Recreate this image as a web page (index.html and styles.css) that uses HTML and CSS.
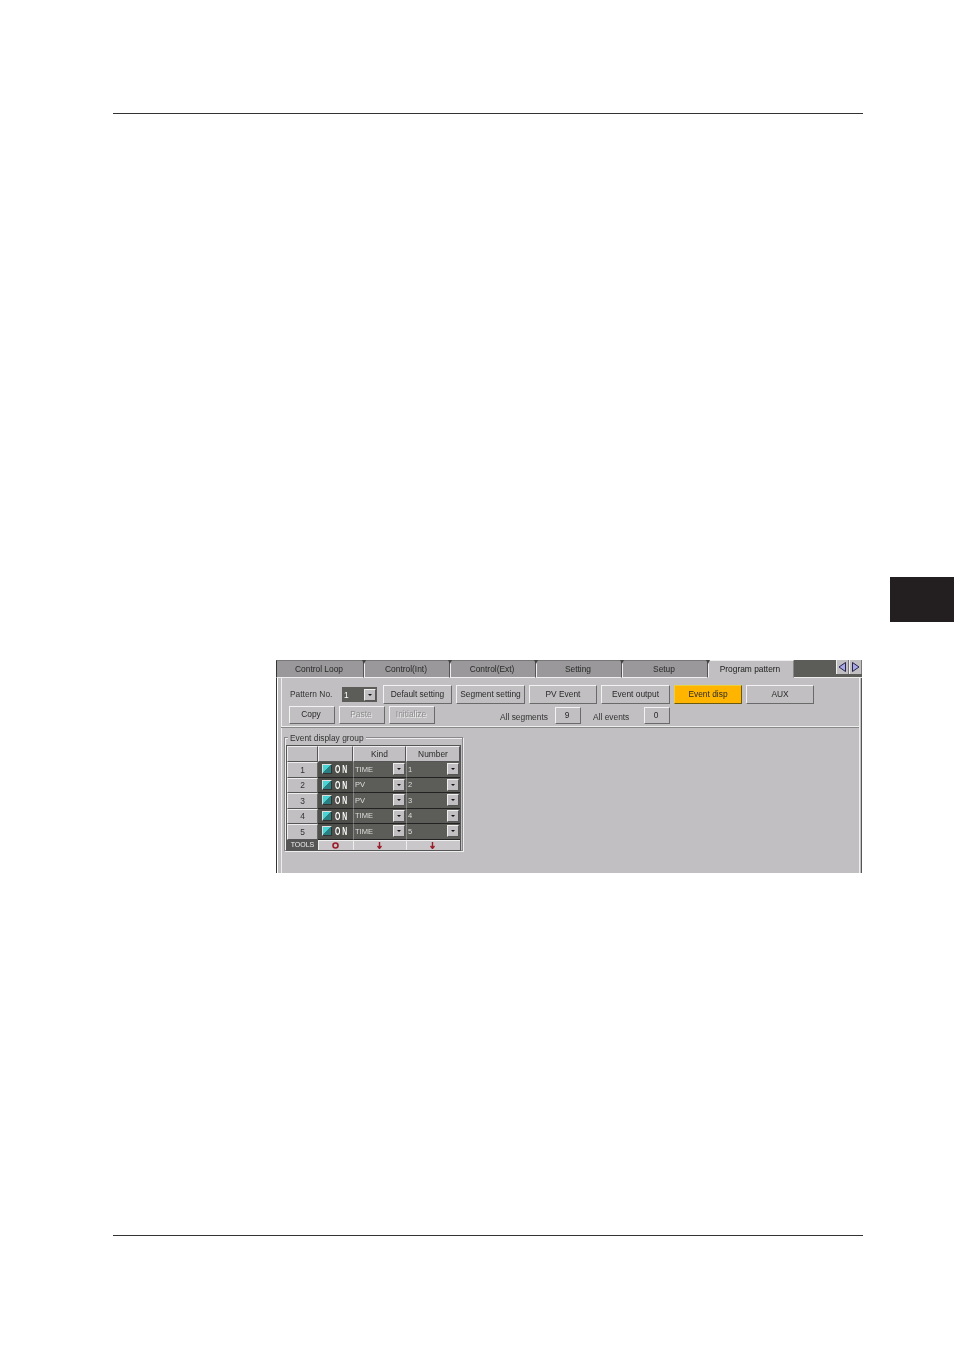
FILE: index.html
```html
<!DOCTYPE html>
<html lang="en">
<head>
    <meta charset="UTF-8">
    <title>Program pattern - Event disp</title>
    <link rel="stylesheet" href="styles.css">
</head>
<body>

    <div class="page">
        <hr class="rule">
        <div class="section-tab"></div>

        <div class="screen">
            <div class="tabs">
                <div class="tab">Control Loop</div>
                <div class="tab">Control(Int)</div>
                <div class="tab">Control(Ext)</div>
                <div class="tab">Setting</div>
                <div class="tab">Setup</div>
                <div class="tab active">Program pattern</div>
                <div class="tab-rest">
                    <div class="arrow-btn"><svg width="9" height="10" viewBox="0 0 9 10"><path d="M7.5 .5V9.5L1 5Z" fill="#a9a8e6" stroke="#23234a"/></svg></div>
                    <div class="arrow-btn"><svg width="9" height="10" viewBox="0 0 9 10"><path d="M1.5 .5V9.5L8 5Z" fill="#a9a8e6" stroke="#23234a"/></svg></div>
                </div>
            </div>

            <div class="panel">
                <div class="toolbar">
                    <div class="row row-top">
                        <span class="label pattern-label">Pattern No.</span>
                        <div class="select pattern-select"><span>1</span><i class="drop"></i></div>
                        <div class="btn wide">Default setting</div>
                        <div class="btn wide">Segment setting</div>
                        <div class="btn wide narrow">PV Event</div>
                        <div class="btn wide">Event output</div>
                        <div class="btn wide narrow selected">Event disp</div>
                        <div class="btn wide narrow">AUX</div>
                    </div>
                    <div class="row row-bottom">
                        <div class="btn small">Copy</div>
                        <div class="btn small disabled">Paste</div>
                        <div class="btn small disabled">Initialize</div>
                        <span class="label segments-label">All segments</span>
                        <div class="count count-seg">9</div>
                        <span class="label events-label">All events</span>
                        <div class="count count-ev">0</div>
                    </div>
                </div>

                <div class="group">
                    <span class="legend">Event display group</span>
                    <div class="grid">
                        <div class="cell head"></div>
                        <div class="cell head"></div>
                        <div class="cell head">Kind</div>
                        <div class="cell head">Number</div>

                        <div class="cell num">1</div>
                        <div class="cell onoff"><i class="lamp"></i><b>ON</b></div>
                        <div class="cell pick"><span>TIME</span><i class="drop"></i></div>
                        <div class="cell pick"><span>1</span><i class="drop"></i></div>

                        <div class="cell num">2</div>
                        <div class="cell onoff"><i class="lamp"></i><b>ON</b></div>
                        <div class="cell pick"><span>PV</span><i class="drop"></i></div>
                        <div class="cell pick"><span>2</span><i class="drop"></i></div>

                        <div class="cell num">3</div>
                        <div class="cell onoff"><i class="lamp"></i><b>ON</b></div>
                        <div class="cell pick"><span>PV</span><i class="drop"></i></div>
                        <div class="cell pick"><span>3</span><i class="drop"></i></div>

                        <div class="cell num">4</div>
                        <div class="cell onoff"><i class="lamp"></i><b>ON</b></div>
                        <div class="cell pick"><span>TIME</span><i class="drop"></i></div>
                        <div class="cell pick"><span>4</span><i class="drop"></i></div>

                        <div class="cell num">5</div>
                        <div class="cell onoff"><i class="lamp"></i><b>ON</b></div>
                        <div class="cell pick"><span>TIME</span><i class="drop"></i></div>
                        <div class="cell pick"><span>5</span><i class="drop"></i></div>

                        <div class="cell tools">TOOLS</div>
                        <div class="cell tool"><svg width="7" height="7" viewBox="0 0 7 7"><circle cx="3.5" cy="3.5" r="2.5" fill="none" stroke="#9c1c2c" stroke-width="1.6"/></svg></div>
                        <div class="cell tool"><svg width="5" height="7" viewBox="0 0 5 7"><path d="M2.5 0V6M.5 4L2.5 6.5 4.5 4" fill="none" stroke="#9c1c2c" stroke-width="1.4"/></svg></div>
                        <div class="cell tool"><svg width="5" height="7" viewBox="0 0 5 7"><path d="M2.5 0V6M.5 4L2.5 6.5 4.5 4" fill="none" stroke="#9c1c2c" stroke-width="1.4"/></svg></div>
                    </div>
                </div>
            </div>
        </div>

        <hr class="rule foot">
    </div>

</body>
</html>
```

FILE: styles.css
```css
html, body {
    margin: 0;
    padding: 0;
    background: #fff;
}
.page {
    position: relative;
    height: 1350px;
    padding-top: 113px;
    box-sizing: border-box;
    font-family: "Liberation Sans", Arial, sans-serif;
    font-size: 8.4px;
    color: #2a2a2a;
}
.rule {
    margin: 0 0 0 113px;
    width: 750px;
    height: 1px;
    border: none;
    background: #333;
}
.rule.foot {
    margin-top: 362px;
}
.section-tab {
    position: absolute;
    left: 890px;
    top: 577px;
    width: 64px;
    height: 45px;
    background: #231f20;
}

/* screen capture, soft like the scanned original */
.screen {
    width: 586px;
    height: 213px;
    margin: 546px 0 0 276px;
    display: flex;
    flex-direction: column;
    background: #c1bfc1;
    filter: blur(.3px);
}
.tabs {
    display: flex;
    height: 18px;
    flex: none;
}
.tab {
    position: relative;
    width: 86px;
    box-sizing: border-box;
    line-height: 17px;
    padding-right: 2px;
    text-align: center;
    background: #9a989a;
    border-left: 1px solid #eee;
    border-right: 1px solid #555;
    border-top: 1px solid #777;
    border-bottom: 1px solid #eee;
}
.tab:first-child {
    width: 88px;
    border-left-color: #333;
}
.tab::after {
    content: "";
    position: absolute;
    right: -3px;
    top: -1px;
    border-left: 2px solid transparent;
    border-right: 2px solid transparent;
    border-top: 4px solid #444;
    z-index: 1;
}
.tab.active {
    background: #c1bfc1;
    border-color: #eee;
    border-right-color: #888;
    border-bottom-color: #c1bfc1;
    color: #222;
}
.tab.active::after {
    display: none;
}
.tab-rest {
    flex: 1;
    display: flex;
    justify-content: flex-end;
    align-items: flex-start;
    background: #5c5c58;
    box-sizing: border-box;
    height: 18px;
    border-bottom: 1px solid #eee;
}
.arrow-btn {
    width: 13px;
    height: 14px;
    box-sizing: border-box;
    display: flex;
    align-items: center;
    justify-content: center;
    background: #c1bfc1;
    border-left: 1px solid #eee;
    border-right: 1px solid #777;
}
.panel {
    flex: 1;
    border-left: 1px solid #333;
    border-right: 1px solid #555;
    box-shadow: inset 1px 0 0 #fff, inset 4px 0 0 #c1bfc1, inset 5px 0 0 #eee, inset -1px 0 0 #c1bfc1, inset -2px 0 0 #eee;
    padding-left: 4px;
    min-height: 0;
}
.toolbar {
    height: 49px;
    box-sizing: border-box;
    border-bottom: 1px solid #eee;
    margin-right: 2px;
    box-shadow: 0 1px 0 #888;
}
.row {
    display: flex;
    align-items: center;
}
.row-top {
    height: 19px;
    padding-top: 7px;
}
.row-bottom {
    height: 18px;
    padding-top: 2px;
}
.label {
    color: #333;
}
.pattern-label {
    margin: 0 0 2px 9px;
    width: 52px;
}
.btn {
    box-sizing: border-box;
    text-align: center;
    background: #c1bfc1;
    border: 1px solid;
    border-color: #f2f2f2 #6a6a6a #6a6a6a #f2f2f2;
}
.btn.wide {
    width: 69px;
    height: 19px;
    line-height: 17px;
    margin-right: 4px;
}
.btn.narrow {
    width: 68px;
}
.select.pattern-select + .btn {
    margin-left: 6px;
}
.btn.selected {
    background: #ffb400;
    border-color: #e8d040 #6a5a10 #6a5a10 #e8d040;
}
.btn.small {
    width: 46px;
    height: 18px;
    line-height: 15px;
    padding-right: 2px;
    margin-right: 4px;
}
.btn.small:first-child {
    margin-left: 8px;
}
.btn.disabled {
    color: #8e8c8e;
    text-shadow: 1px 1px 0 #eee;
}
.select {
    display: flex;
    align-items: center;
    justify-content: space-between;
    box-sizing: border-box;
    background: #5c5c58;
    color: #fff;
    padding: 0 1px 0 2px;
}
.pattern-select {
    width: 35px;
    height: 15px;
}
.drop {
    position: relative;
    flex: none;
    display: block;
    box-sizing: border-box;
    width: 12px;
    height: 12px;
    background: #c1bfc1;
    border: 1px solid;
    border-color: #eee #555 #555 #eee;
}
.drop::after {
    content: "";
    position: absolute;
    left: 3px;
    top: 4px;
    border-left: 2px solid transparent;
    border-right: 2px solid transparent;
    border-top: 2px solid #111;
}
.segments-label {
    margin-left: 61px;
    padding-top: 4px;
    width: 55px;
}
.events-label {
    margin-left: 12px;
    padding-top: 4px;
    width: 51px;
}
.count {
    box-sizing: border-box;
    width: 26px;
    height: 17px;
    line-height: 14px;
    padding-right: 2px;
    text-align: center;
    border: 1px solid;
    border-color: #f2f2f2 #6a6a6a #6a6a6a #f2f2f2;
}

/* event display group */
.group {
    position: relative;
    width: 179px;
    height: 114px;
    box-sizing: border-box;
    margin: 10px 0 0 3px;
    border: 1px solid #8a888a;
    box-shadow: inset 1px 1px 0 #eee, 1px 1px 0 #eee;
}
.legend {
    position: absolute;
    left: 3px;
    top: -5px;
    padding: 0 2px;
    line-height: 10px;
    background: #c1bfc1;
    color: #333;
}
.grid {
    display: grid;
    grid-template-columns: 31px 35px 53px 54px;
    grid-template-rows: 16px repeat(5, 15.5px) 10px;
    margin: 8px 0 0 2px;
    width: 173px;
    background: #555;
    outline: 1px solid #555;
}
.cell {
    box-sizing: border-box;
    display: flex;
    align-items: center;
    justify-content: center;
    overflow: hidden;
}
.head {
    background: #c1bfc1;
    border: 1px solid;
    border-color: #eee #555 #555 #eee;
}
.num {
    background: #c1bfc1;
    border: 1px solid;
    border-color: #eee #666 #555 #eee;
    color: #333;
}
.onoff {
    background: #4e4e4a;
    justify-content: flex-start;
    padding-left: 4px;
    border-bottom: 1px solid #222;
}
.lamp {
    display: block;
    flex: none;
    box-sizing: border-box;
    width: 10px;
    height: 10px;
    border: 1px solid #ddd;
    border-right-color: #333;
    border-bottom-color: #333;
    background: linear-gradient(135deg, #48d4d4 0 50%, #2a7f80 50% 100%);
}
.onoff b {
    margin-left: 3px;
    font-size: 11px;
    letter-spacing: 3px;
    color: #fff;
    transform: scaleX(.62);
    transform-origin: left center;
}
.pick {
    background: #5c5c58;
    color: #ddd;
    font-size: 7.5px;
    justify-content: space-between;
    padding: 0 1px 0 1px;
    border-bottom: 1px solid #222;
    border-left: 1px solid #888;
}
.tools {
    background: #555;
    color: #eee;
    font-size: 7px;
}
.tool {
    background: #c9c7c9;
    border-top: 1px solid #eee;
    border-left: 1px solid #eee;
    padding-right: 2px;
}
```
